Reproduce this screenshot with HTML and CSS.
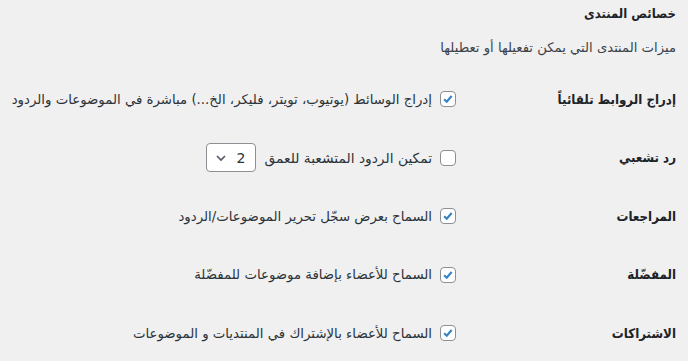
FILE: index.html
```html
<!DOCTYPE html>
<html lang="ar" dir="rtl">
<head>
<meta charset="utf-8">
<link rel="stylesheet" href="styles.css">
</head>
<body>
<div class="wrap">
  <h2 class="title">خصائص المنتدى</h2>
  <p class="desc">ميزات المنتدى التي يمكن تفعيلها أو تعطيلها</p>
  <div class="rows">
    <div class="row">
      <div class="label">إدراج الروابط تلقائياً</div>
      <div class="field"><span class="cb checked"><svg viewBox="0 0 16 16"><path d="M3.6 8.2l3 3 5.6-6.6" /></svg></span><span class="text">إدراج الوسائط (يوتيوب، تويتر، فليكر، الخ...) مباشرة في الموضوعات والردود</span></div>
    </div>
    <div class="row">
      <div class="label">رد تشعبي</div>
      <div class="field"><span class="cb"></span><span class="text wide">تمكين الردود المتشعبة للعمق</span><span class="select"><span class="val">2</span><svg viewBox="0 0 12 8"><path d="M2 2l4 4 4-4"/></svg></span></div>
    </div>
    <div class="row">
      <div class="label">المراجعات</div>
      <div class="field"><span class="cb checked"><svg viewBox="0 0 16 16"><path d="M3.6 8.2l3 3 5.6-6.6" /></svg></span><span class="text">السماح بعرض سجّل تحرير الموضوعات/الردود</span></div>
    </div>
    <div class="row">
      <div class="label">المفضّلة</div>
      <div class="field"><span class="cb checked"><svg viewBox="0 0 16 16"><path d="M3.6 8.2l3 3 5.6-6.6" /></svg></span><span class="text">السماح للأعضاء بإضافة موضوعات للمفضّلة</span></div>
    </div>
    <div class="row">
      <div class="label">الاشتراكات</div>
      <div class="field"><span class="cb checked"><svg viewBox="0 0 16 16"><path d="M3.6 8.2l3 3 5.6-6.6" /></svg></span><span class="text">السماح للأعضاء بالإشتراك في المنتديات و الموضوعات</span></div>
    </div>
  </div>
</div>
</body>
</html>
```
FILE: styles.css
```css
html, body {
  margin: 0;
  background: #f0f0f1;
}
body {
  font-family: "DejaVu Sans", "Noto Sans", sans-serif;
  color: #1d2327;
  font-size: 13px;
}
.wrap {
  padding: 0 12px 0 10px;
}
.title {
  margin: 0;
  padding-top: 4px;
  font-family: "DejaVu Sans Condensed", "DejaVu Sans", sans-serif;
  font-size: 13px;
  font-weight: bold;
  line-height: 20px;
}
.desc {
  margin: 14px 0 0;
  font-size: 13.2px;
  line-height: 20px;
  color: #3c434a;
}
.rows {
  display: flex;
  flex-direction: column;
  margin-top: 12px;
}
.row {
  display: flex;
  align-items: center;
  height: 58.5px;
}
.label {
  width: 220px;
  flex: none;
  font-family: "DejaVu Sans Condensed", "DejaVu Sans", sans-serif;
  font-weight: bold;
  font-size: 13.2px;
}
.field {
  display: flex;
  align-items: center;
  gap: 6px;
}
.text {
  color: #2c3338;
  font-size: 13.3px;
  white-space: nowrap;
}
.text.wide {
  font-size: 13.8px;
}
.cb {
  width: 14px;
  height: 14px;
  border: 1px solid #8c8f94;
  border-radius: 4px;
  background: #fff;
  display: inline-flex;
  flex: none;
  margin-left: 2px;
}
.cb svg {
  width: 14px;
  height: 14px;
  fill: none;
  stroke: #3582c4;
  stroke-width: 2.4;
}
.select {
  display: inline-flex;
  align-items: center;
  justify-content: space-between;
  width: 50px;
  height: 29px;
  box-sizing: border-box;
  border: 1px solid #8c8f94;
  border-radius: 4px;
  background: #fff;
  padding: 0 9px 0 8px;
  margin-right: 3px;
  font-size: 14px;
  color: #2c3338;
}
.select svg {
  width: 12px;
  height: 8px;
  fill: none;
  stroke: #50575e;
  stroke-width: 1.6;
}
```
